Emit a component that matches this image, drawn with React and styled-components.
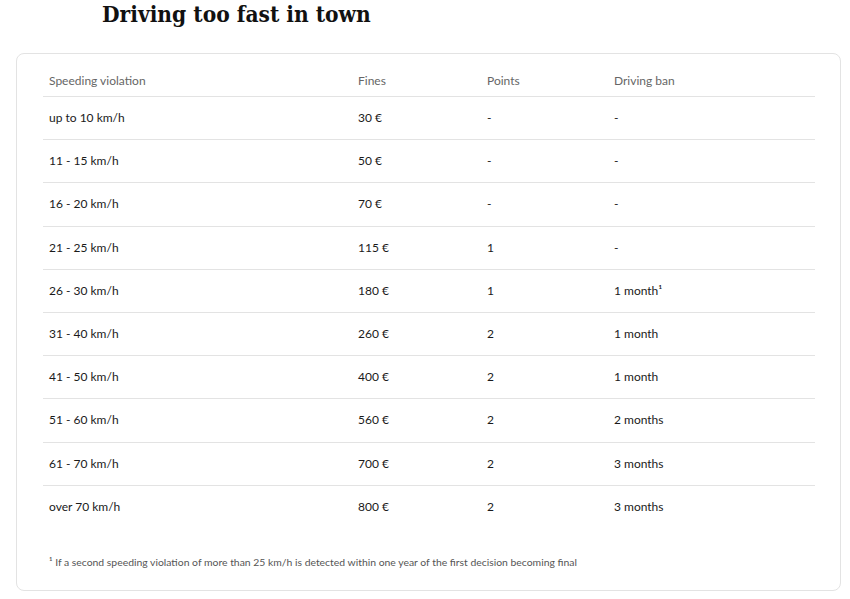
import React from 'react'
import styled, { createGlobalStyle } from 'styled-components'

const GlobalStyle = createGlobalStyle`
  body {
    margin: 0;
    background: #fff;
    font-family: Lato, "Noto Sans", sans-serif;
  }
`

const rows = [
  ['up to 10 km/h', '30 €', '-', '-'],
  ['11 - 15 km/h', '50 €', '-', '-'],
  ['16 - 20 km/h', '70 €', '-', '-'],
  ['21 - 25 km/h', '115 €', '1', '-'],
  ['26 - 30 km/h', '180 €', '1', '1 month¹'],
  ['31 - 40 km/h', '260 €', '2', '1 month'],
  ['41 - 50 km/h', '400 €', '2', '1 month'],
  ['51 - 60 km/h', '560 €', '2', '2 months'],
  ['61 - 70 km/h', '700 €', '2', '3 months'],
  ['over 70 km/h', '800 €', '2', '3 months'],
]

export default function App() {
  return (
    <Page>
      <GlobalStyle />
      <Title>Driving too fast in town</Title>
      <Card>
        <Table>
          <colgroup>
            <col style={{ width: 309 }} />
            <col style={{ width: 129 }} />
            <col style={{ width: 127 }} />
            <col />
          </colgroup>
          <thead>
            <tr>
              <Th>Speeding violation</Th>
              <Th>Fines</Th>
              <Th>Points</Th>
              <Th>Driving ban</Th>
            </tr>
          </thead>
          <tbody>
            {rows.map((r) => (
              <Row key={r[0]}>
                {r.map((c, i) => (
                  <Td key={i}>{c}</Td>
                ))}
              </Row>
            ))}
          </tbody>
        </Table>
        <Footnote>¹ If a second speeding violation of more than 25 km/h is detected within one year of the first decision becoming final</Footnote>
      </Card>
    </Page>
  )
}

const Page = styled.div`
  padding: 0 9px 9px 16px;
`

const Title = styled.h1`
  margin: 0 0 25px 86px;
  font-family: "DejaVu Serif Condensed", "DejaVu Serif", serif;
  font-weight: bold;
  font-size: 22.5px;
  line-height: 27px;
  padding-top: 1px;
  color: #111;
`

const Card = styled.div`
  border: 1px solid #e3e3e3;
  border-radius: 8px;
  padding: 0 25px 21px 26px;
`

const Table = styled.table`
  width: 100%;
  border-collapse: collapse;
  table-layout: fixed;
`

const Th = styled.th`
  text-align: left;
  font-weight: normal;
  font-size: 12px;
  line-height: 16px;
  color: #666;
  padding: 19px 6px 7px;
  border-bottom: 1px solid #e3e3e3;
`

const Row = styled.tr`
  border-bottom: 1px solid #e3e3e3;
  &:last-child {
    border-bottom: none;
  }
`

const Td = styled.td`
  font-size: 12px;
  line-height: 16px;
  color: #1a1a1a;
  padding: 13.1px 6px;
`

const Footnote = styled.p`
  margin: 27px 0 0 6px;
  font-size: 10.4px;
  line-height: 14px;
  color: #555;
`
